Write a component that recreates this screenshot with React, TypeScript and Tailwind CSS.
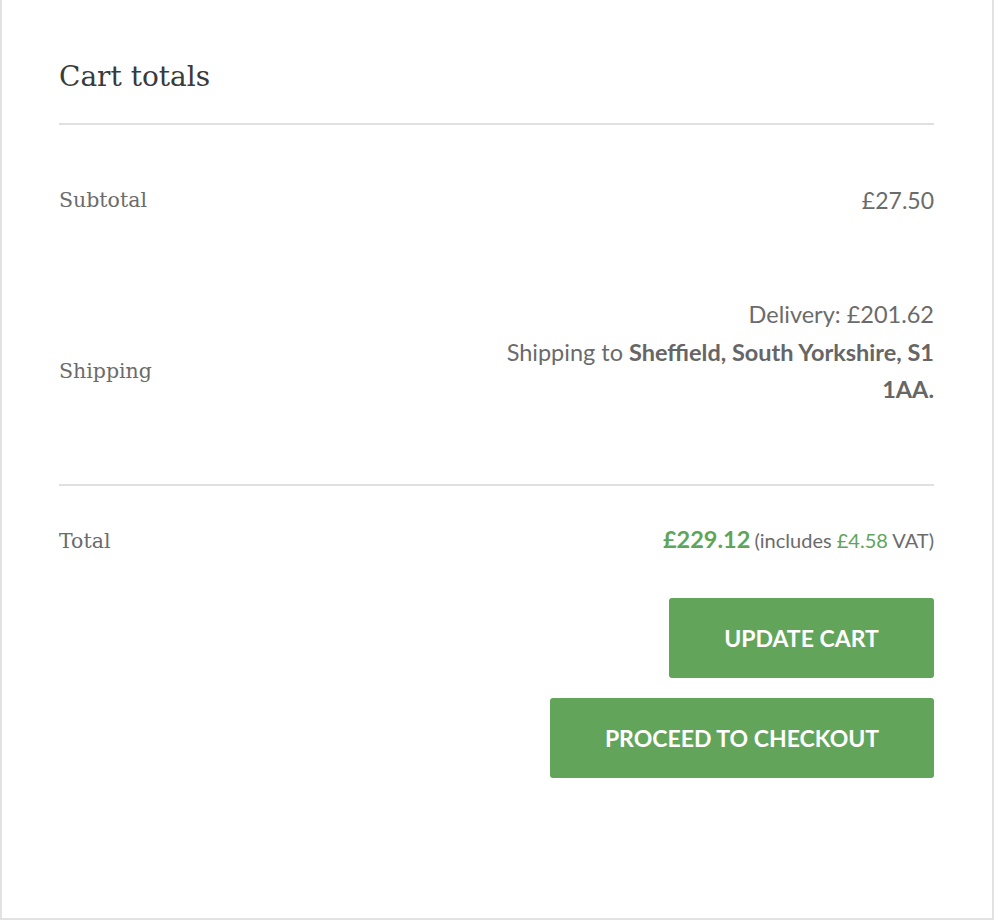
export default function App() {
  const serif = "font-['DejaVu_Serif',serif]";
  const sans = "font-['Lato',sans-serif]";
  return (
    <div className="bg-white w-[1000px] h-[924px]">
      <div className="w-[994px] h-[920px] border-x-2 border-b-2 border-[#e2e2e2] pl-[57px] pr-[58px]">
        <h2 className={`${serif} text-[28px] leading-[40px] pt-[57px] pb-[26px] text-[#3a3a3a] font-normal`}>
          Cart totals
        </h2>
        <div className="border-t-2 border-[#e0e0e0]" />

        <div className="flex items-center justify-between h-[150px]">
          <span className={`${serif} text-[20.5px] text-[#6b6b6b]`}>Subtotal</span>
          <span className={`${sans} text-[23px] text-[#6b6b6b]`}>£27.50</span>
        </div>

        <div className="flex items-start justify-between h-[209px] pt-[21px]">
          <span className={`${serif} text-[20.5px] leading-[30px] mt-[60px] text-[#6b6b6b]`}>Shipping</span>
          <div className={`${sans} text-[23.5px] leading-[37.5px] text-right text-[#6b6b6b] w-[445px]`}>
            <p>Delivery: £201.62</p>
            <p>
              Shipping to <strong className="font-bold text-[#666]">Sheffield, South Yorkshire, S1 1AA.</strong>
            </p>
          </div>
        </div>

        <div className="border-t-2 border-[#e0e0e0]" />

        <div className="flex items-center justify-between pt-[38px]">
          <span className={`${serif} text-[20.5px] leading-[30px] text-[#6b6b6b]`}>Total</span>
          <span className={`${sans} text-[#6b6b6b] leading-[30px]`}>
            <strong className="text-[23.5px] font-bold text-[#5fa557]">£229.12</strong>{" "}
            <small className="text-[20px]">
              (includes <span className="text-[#5fa557]">£4.58</span> VAT)
            </small>
          </span>
        </div>

        <div className="flex flex-col items-end gap-[20px] pt-[41px]">
          <button className={`${sans} w-[265px] h-[80px] rounded-[3px] bg-[#62a55a] text-white font-bold text-[23px] uppercase`}>
            Update cart
          </button>
          <button className={`${sans} w-[384px] h-[80px] rounded-[3px] bg-[#62a55a] text-white font-bold text-[23px] uppercase`}>
            Proceed to checkout
          </button>
        </div>
      </div>
    </div>
  );
}
